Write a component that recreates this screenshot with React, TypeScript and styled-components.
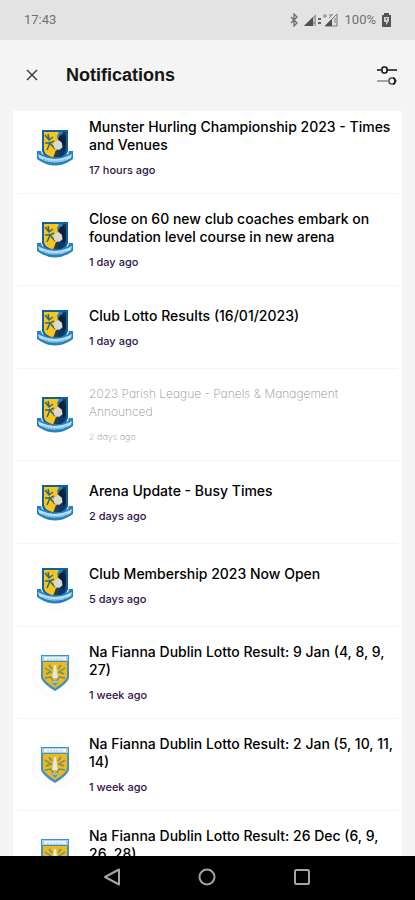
import React from "react";
import styled, { createGlobalStyle } from "styled-components";

const GlobalStyle = createGlobalStyle`
  * { box-sizing: border-box; }
  body { margin: 0; background: #f4f4f4; font-family: Inter, "Liberation Sans", sans-serif; }
  button { border: 0; padding: 0; background: none; cursor: pointer; display: flex; align-items: center; justify-content: center; }
  svg { display: block; flex: none; }
`;

const Screen = styled.div`
  height: 100vh;
  display: flex;
  flex-direction: column;
  overflow: hidden;
  background: #f4f4f4;
`;

const StatusBar = styled.div`
  flex: none;
  height: 40px;
  padding: 0 24px;
  display: flex;
  align-items: center;
  justify-content: space-between;
  background: #e3e3e3;
  color: #707070;
  font: 400 13px/16px Roboto, sans-serif;
`;

const StatusIcons = styled.div`
  display: flex;
  align-items: center;
  gap: 6px;
`;

const Header = styled.header`
  flex: none;
  height: 71px;
  padding: 0 16px 2px 20px;
  display: flex;
  align-items: center;
`;

const IconButton = styled.button`
  width: 24px;
  height: 24px;
`;

const PageTitle = styled.h1`
  flex: 1;
  margin: 0 0 0 22px;
  color: #161616;
  font: 700 18px/24px "Liberation Sans", sans-serif;
`;

const List = styled.ul`
  flex: 1;
  min-height: 0;
  overflow: hidden;
  margin: 0 13px;
  padding: 0;
  list-style: none;
  background: #fff;
`;

const Row = styled.li`
  min-height: 83px;
  margin: 0 4px;
  padding: 16px 4px 15px 14px;
  display: flex;
  align-items: center;
  gap: 10px;
  border-bottom: 1px solid #f3f3f3;

  &:first-child { padding-top: 6px; }
`;

const Message = styled.div`
  flex: 1;
  min-width: 0;
`;

const Title = styled.h2<{ $read?: boolean }>`
  margin: 0 0 8px;
  max-width: ${(p) => (p.$read ? "260px" : "none")};
  color: ${(p) => (p.$read ? "#909090" : "#000")};
  font-size: ${(p) => (p.$read ? 12 : 14)}px;
  font-weight: ${(p) => (p.$read ? 200 : 500)};
  font-feature-settings: ${(p) => (p.$read ? '"cv11"' : "normal")};
  line-height: 18px;
`;

const Time = styled.time<{ $read?: boolean }>`
  display: block;
  min-height: 16px;
  color: ${(p) => (p.$read ? "#909090" : "#2f1348")};
  font-size: ${(p) => (p.$read ? 9 : 11)}px;
  font-weight: ${(p) => (p.$read ? 200 : 500)};
  font-feature-settings: ${(p) => (p.$read ? '"cv11"' : "normal")};
  line-height: 16px;
`;

const NavBar = styled.nav`
  flex: none;
  height: 44px;
  padding: 0 2px 2px 0;
  display: flex;
  align-items: center;
  justify-content: center;
  gap: 71px;
  background: #000;
`;

const ArenaCrest = () => (
  <svg width="48" height="48" viewBox="0 1 48 48" role="img" aria-label="Club crest">
    <circle cx="24" cy="25" r="23" fill="#fff" stroke="#fafafa" />
    <path d="M11 7H37V28Q36 34 24 39Q12 34 11 28Z" fill="#12609c" />
    <path d="M13 9H28V35Q14 34 13 27Z" fill="#f8c51c" />
    <path d="M28 9H35V28Q33 34 25 36L26 29Z" fill="#0c3965" />
    <path d="M28 9H32L30 14L32 17L27 18L26 13Z" fill="#2585bb" />
    <path d="M14 12L18 17L22 14M16 27L19 20L23 18M18 19L24 26M14 20L19 20M17 11L18 16" fill="none" stroke="#2d6680" strokeWidth="1.500" />
    <path d="M23 20L27 17L31 19L32 24L28 27L23 25Z" fill="#d9d9d2" />
    <path d="M27 16L29 12L33 11L35 16L34 26L32 28L31 20Z" fill="#10203b" />
    <path d="M25 27L28 28L27 34L22 35Z" fill="#263e4b" />
    <path d="M6 28L10 28L11 31Q24 38 37 31L38 28L42 28L42 36L39 38Q24 47 9 38L6 36Z" fill="#2383bc" />
    <path d="M7 31L11 33Q24 39 37 33L41 31L40 35Q24 44 8 35Z" fill="#bbdcf2" />
    <path d="M12 36Q24 41 36 36" fill="none" stroke="#6eafd9" strokeWidth="1.2" strokeDasharray="2 1" />
  </svg>
);

const FiannaCrest = () => (
  <svg width="48" height="48" viewBox="0 0 48 48" role="img" aria-label="Na Fianna crest">
    <circle cx="24" cy="24" r="23" fill="#fdfdfd" stroke="#f8f8f8" />
    <path d="M10 6H38V29Q36 35 24 42Q12 35 10 29Z" fill="#4590bd" />
    <path d="M11 7H37V12H11Z" fill="#a7cfe8" />
    <path d="M13 8H35V11H13Z" fill="#eef6fb" />
    <path d="M16 10H32" stroke="#a6cae0" strokeDasharray="2 1" />
    <path d="M12 13H36V28Q34 33 24 39Q14 33 12 28Z" fill="#edb91e" />
    <path d="M14 19L20 23L15 25M34 19L28 23L33 25M14 29L20 28L22 32M34 29L28 28L26 32M18 16L21 20M30 16L27 20" fill="none" stroke="#6b8e70" strokeWidth="1.500" />
    <path d="M23 16H25L26 24L27 29H21L22 24Z" fill="#dfebe4" />
    <path d="M20 33Q24 30 28 33L24 37Z" fill="#579bbb" />
    <path d="M21 33H27" stroke="#e0e8cf" />
  </svg>
);

const items = [
  { title: "Munster Hurling Championship 2023 - Times and Venues", time: "17 hours ago" },
  { title: "Close on 60 new club coaches embark on foundation level course in new arena", time: "1 day ago" },
  { title: "Club Lotto Results (16/01/2023)", time: "1 day ago" },
  { title: "2023 Parish League - Panels & Management Announced", time: "2 days ago", read: true },
  { title: "Arena Update - Busy Times", time: "2 days ago" },
  { title: "Club Membership 2023 Now Open", time: "5 days ago" },
  { title: "Na Fianna Dublin Lotto Result: 9 Jan (4, 8, 9, 27)", time: "1 week ago", fianna: true },
  { title: "Na Fianna Dublin Lotto Result: 2 Jan (5, 10, 11, 14)", time: "1 week ago", fianna: true },
  { title: "Na Fianna Dublin Lotto Result: 26 Dec (6, 9, 26, 28)", fianna: true },
];

export default function App() {
  return (
    <Screen>
      <GlobalStyle />
      <StatusBar>
        <span>17:43</span>
        <StatusIcons>
          <svg width="8" height="14" viewBox="0 0 8 14" fill="none" stroke="#6c6c6c" strokeWidth="1.3">
            <path d="M1 4L7 10L4 13V1L7 4L1 10" />
          </svg>
          <svg width="35" height="14" viewBox="0 0 35 14">
            <path d="M0 13L12 1V13Z" fill="#999" />
            <path d="M0 13L9 4V13Z" fill="#505050" />
            <path d="M10 5V9M10 11V13" stroke="#e3e3e3" />
            <path d="M14 5H17V7H14ZM14 9H17V11H14Z" fill="#606060" />
            <path d="M21 13L33 1V13Z" fill="#ddd" stroke="#777" />
            <path d="M21 13L28 6V13Z" fill="#505050" />
            <path d="M19 3H23M21 1V5M25 2H28M25 5L29 1M31 5V10" stroke="#808080" />
          </svg>
          <span>100%</span>
          <svg width="9" height="14" viewBox="0 0 9 14">
            <path d="M0 2H2V0H7V2H9V14H0Z" fill="#555" />
            <path d="M2 4H7V8L4 12V9H2ZM4 5V7H5V5Z" fill="#cfcfcf" fillRule="evenodd" />
          </svg>
        </StatusIcons>
      </StatusBar>
      <Header>
        <IconButton aria-label="Close">
          <svg width="12" height="12" viewBox="0 0 12 12" stroke="#333" strokeWidth="1.4">
            <path d="M1 1L11 11M11 1L1 11" />
          </svg>
        </IconButton>
        <PageTitle>Notifications</PageTitle>
        <IconButton aria-label="Notification settings">
          <svg width="20" height="20" viewBox="0 0 20 20" fill="none">
            <path d="M0 5H4M10 5H20" stroke="#111" strokeWidth="1.600" />
            <rect x="5" y="2" width="5" height="6" rx="2" stroke="#111" strokeWidth="1.600" />
            <path d="M0 16H11M18 16H20" stroke="#888" strokeWidth="1.600" />
            <rect x="12" y="13" width="6" height="6" rx="2.500" stroke="#555" strokeWidth="1.600" />
            <path d="M16 13Q18 13 18 16T16 19" stroke="#111" strokeWidth="1.500" />
          </svg>
        </IconButton>
      </Header>
      <List>
        {items.map((item) => (
          <Row key={item.title}>
            {item.fianna ? <FiannaCrest /> : <ArenaCrest />}
            <Message>
              <Title $read={item.read}>{item.title}</Title>
              <Time $read={item.read}>{item.time}</Time>
            </Message>
          </Row>
        ))}
      </List>
      <NavBar>
        <IconButton aria-label="Back">
          <svg width="18" height="18" viewBox="0 0 18 18" fill="none" stroke="#a5a5a5" strokeWidth="2" strokeLinejoin="round">
            <path d="M16 1.500V16.500L2 9Z" />
          </svg>
        </IconButton>
        <IconButton aria-label="Home">
          <svg width="18" height="18" viewBox="0 0 18 18" fill="none" stroke="#a5a5a5" strokeWidth="2">
            <circle cx="9" cy="9" r="7.500" />
          </svg>
        </IconButton>
        <IconButton aria-label="Recent apps">
          <svg width="18" height="18" viewBox="0 0 18 18" fill="none" stroke="#a5a5a5" strokeWidth="2">
            <rect x="2" y="2" width="14" height="14" rx="1.500" />
          </svg>
        </IconButton>
      </NavBar>
    </Screen>
  );
}
